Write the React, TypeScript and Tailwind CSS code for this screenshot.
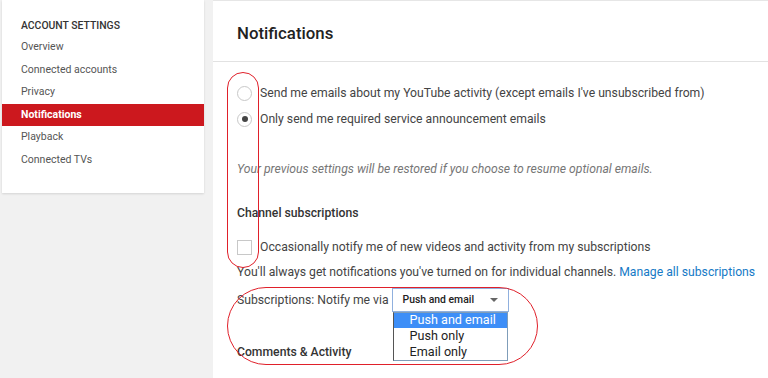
import { useState } from "react";

const navItems = [
  "Overview",
  "Connected accounts",
  "Privacy",
  "Notifications",
  "Playback",
  "Connected TVs",
];

function Radio({ checked }: { checked?: boolean }) {
  return (
    <span className="w-[15px] h-[15px] rounded-full border border-[#c8c8c8] bg-white flex items-center justify-center shrink-0">
      {checked && <span className="w-[6px] h-[6px] rounded-full bg-[#444]" />}
    </span>
  );
}

export default function App() {
  const [active] = useState("Notifications");
  return (
    <div className="relative w-[768px] h-[378px] overflow-hidden bg-[#f1f1f1] flex font-['Roboto',sans-serif] text-[#444]">
      <aside className="ml-[2px] w-[202px] h-[193px] bg-white shadow-[0_1px_2px_rgba(0,0,0,0.12)] pt-[14px] shrink-0">
        <div className="h-[22px] pl-[19px] pt-[2px] flex items-center text-[10.4px] font-medium text-[#333]">
          ACCOUNT SETTINGS
        </div>
        <ul>
          {navItems.map((item) => (
            <li
              key={item}
              className={
                item === active
                  ? "h-[22.5px] pl-[19px] flex items-center text-[10.5px] font-bold text-white bg-[#cc181e]"
                  : "h-[22.5px] pl-[19px] flex items-center text-[10.5px] text-[#555]"
              }
            >
              {item}
            </li>
          ))}
        </ul>
      </aside>

      <main className="ml-[9px] flex-1 bg-white border-t border-[#e6e6e6]">
        <header className="h-[61px] border-b border-[#e2e2e2] pl-[24px] pt-[5px] flex items-center">
          <h1 className="text-[16.8px] font-medium text-[#222]">Notifications</h1>
        </header>

        <div className="pl-[24px] pt-[18px] text-[12.2px]">
          <label className="h-[26px] flex items-center gap-[8px]">
            <Radio />
            <span>Send me emails about my YouTube activity (except emails I've unsubscribed from)</span>
          </label>
          <label className="h-[26px] flex items-center gap-[8px]">
            <Radio checked />
            <span>Only send me required service announcement emails</span>
          </label>

          <p className="mt-[27px] h-[20px] flex items-center italic text-[#767676]">
            Your previous settings will be restored if you choose to resume optional emails.
          </p>

          <h2 className="mt-[24px] h-[20px] flex items-center font-medium text-[#333]">
            Channel subscriptions
          </h2>

          <label className="mt-[11px] h-[26px] flex items-center gap-[8px]">
            <span className="w-[15px] h-[15px] border border-[#c8c8c8] bg-white shrink-0" />
            <span>Occasionally notify me of new videos and activity from my subscriptions</span>
          </label>

          <p className="mt-[2px] h-[20px] flex items-center whitespace-nowrap">
            You'll always get notifications you've turned on for individual channels.&nbsp;
            <a className="text-[#167ac6]">Manage all subscriptions</a>
          </p>

          <div className="mt-[6px] h-[24px] flex items-center">
            <span>Subscriptions: Notify me via</span>
            <div className="relative ml-[3px]">
              <div className="w-[117px] h-[24px] border border-[#90b0de] bg-white flex items-center justify-between pl-[10px] pr-[10px] text-[10.4px] font-medium text-[#222]">
                <span>Push and email</span>
                <span className="w-0 h-0 border-l-[4px] border-r-[4px] border-t-[4px] border-l-transparent border-r-transparent border-t-[#666]" />
              </div>
              <ul className="absolute left-[1px] top-[24px] w-[115px] h-[49px] bg-white border border-[#7f9db9] border-l-[#555] text-[12.6px] text-[#222] z-10">
                <li className="h-[15px] flex items-center pl-[16px] bg-[#3d8ef7] text-white">Push and email</li>
                <li className="h-[16px] flex items-center pl-[16px]">Push only</li>
                <li className="h-[16px] flex items-center pl-[16px]">Email only</li>
              </ul>
            </div>
          </div>

          <h2 className="mt-[30px] h-[20px] flex items-center font-medium text-[#333]">
            Comments &amp; Activity
          </h2>
        </div>
      </main>

      {/* red annotation marks */}
      <div className="absolute left-[227px] top-[72px] w-[32px] h-[196px] rounded-[17px] border-[1.5px] border-[#e0202a] pointer-events-none" />
      <div className="absolute left-[227px] top-[287px] w-[311px] h-[78px] rounded-[40px] border-[1.5px] border-[#e0202a] pointer-events-none" />
    </div>
  );
}
